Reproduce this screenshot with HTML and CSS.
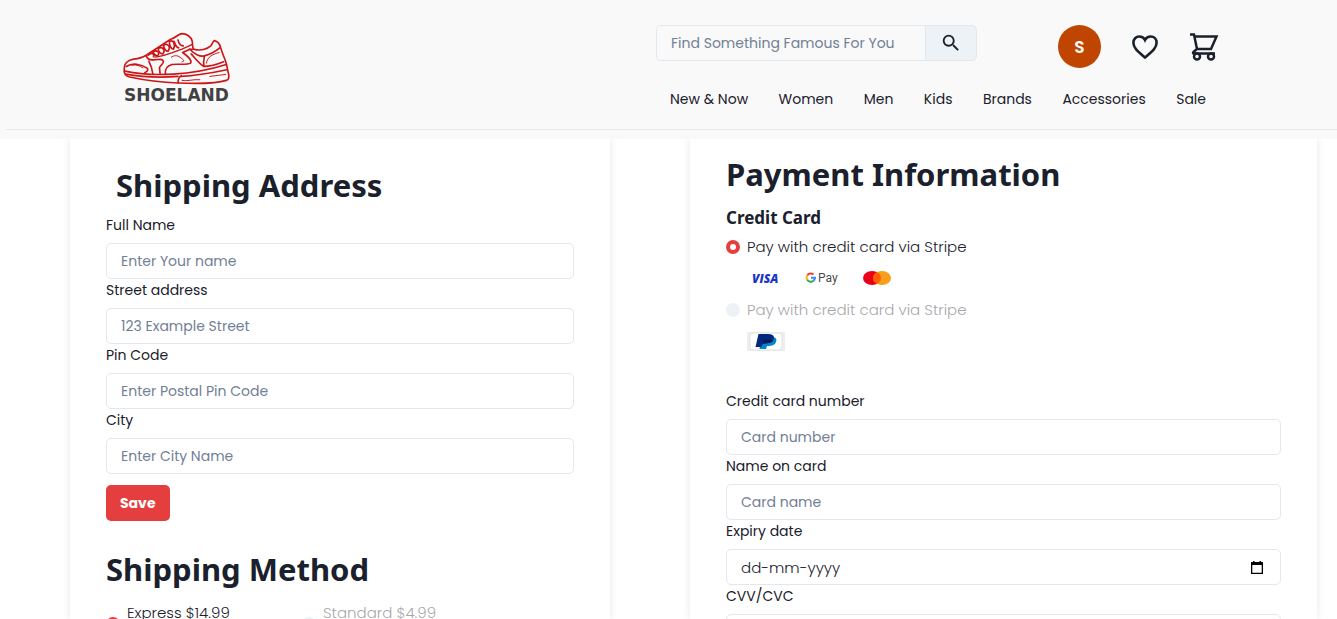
FILE: index.html
```html
<!DOCTYPE html>
<html lang="en">
<head>
<meta charset="utf-8">
<meta name="viewport" content="width=device-width, initial-scale=1">
<title>Shoeland – Checkout</title>
<link rel="stylesheet" href="styles.css">
</head>
<body>
<div class="page">
  <header class="header">
    <div class="header-inner">
      <a class="brand" href="#" aria-label="Shoeland home">
        <svg class="brand-shoe" viewBox="36 36 327 160" fill="none" stroke="#cc1517" stroke-width="5" stroke-linecap="round" stroke-linejoin="round" aria-hidden="true">
          <path d="M42 150C40 134 50 121 70 118C84 116 96 114 108 106L182 58C194 56 204 42 216 41C230 41 244 50 247 64C249 76 246 84 252 88C272 94 292 88 303 78C309 72 308 64 314 62C324 64 330 72 333 84C338 102 346 116 350 132L356 160C359 172 357 180 350 182C320 192 250 192 205 190C150 188 95 180 58 172C44 168 40 160 42 150Z"/>
          <path d="M44 154C80 162 140 166 190 163C250 160 305 148 350 134M46 163C90 171 150 174 204 170"/>
          <path d="M48 140C66 128 92 132 112 146C114 152 110 156 104 158"/>
          <path d="M108 108C112 118 118 122 132 120C146 118 158 116 160 124C161 134 150 136 148 144L150 162M116 124C122 136 126 146 128 162"/>
          <path d="M166 162C164 148 172 138 186 134C204 132 232 136 242 130C248 122 232 108 218 98L240 88L252 88"/>
          <path d="M134 112C160 110 190 98 216 88L246 74" stroke-width="4"/>
          <path d="M114 106C124 96 134 102 130 110M128 96C140 88 152 98 142 108M128 96C132 104 136 108 142 108M144 86C156 78 168 90 158 102M144 86C146 96 150 102 158 102M160 76C172 68 184 80 174 94M160 76C162 86 166 94 174 94M178 64C190 58 198 74 190 88M178 64C178 78 182 86 190 88M192 64C196 76 198 82 206 84M204 60C206 70 210 78 220 78" stroke-width="5"/>
          <path d="M240 88C254 104 272 112 284 108C300 104 318 94 330 84M244 102C260 120 268 132 282 140C280 122 284 110 284 108M282 140C298 140 322 134 342 126"/>
          <path d="M290 130C292 112 306 104 328 98M184 112C192 106 202 106 210 112C220 120 228 124 216 126" stroke-width="3"/>
          <path d="M204 190C204 178 206 172 214 168M212 170C258 168 304 160 352 150"/>
          <path d="M216 182C230 186 250 178 270 180M64 136C78 134 90 138 98 144M300 170C318 168 334 166 348 164" stroke-width="3"/>
        </svg>
        <span class="brand-name">SHOELAND</span>
      </a>
      <div class="header-main">
        <div class="header-top">
          <form class="search" role="search">
            <input class="search-input" type="search" aria-label="Search" placeholder="Find Something Famous For You">
            <button class="search-button" type="button" aria-label="Search">
              <svg width="22" height="22" viewBox="0 0 24 24" fill="currentColor" aria-hidden="true"><path d="M15.5 14h-.79l-.28-.27A6.47 6.47 0 0 0 16 9.5 6.5 6.5 0 1 0 9.5 16c1.61 0 3.09-.59 4.23-1.57l.27.28v.79l5 4.99L20.49 19l-4.99-5zm-6 0C7.01 14 5 11.99 5 9.5S7.01 5 9.5 5 14 7.01 14 9.5 11.99 14 9.5 14z"/></svg>
            </button>
          </form>
          <div class="actions">
            <button class="avatar" type="button" aria-label="Account">S</button>
            <a class="action" href="#" aria-label="Wishlist">
              <svg width="30" height="28" viewBox="0 0 30 28" fill="none" stroke="currentColor" stroke-width="2.600" aria-hidden="true"><path d="M15 24.500C8 18.500 3.400 15 3.400 9.800C3.400 6 6 3.500 9.300 3.500C11.700 3.500 13.900 4.800 15 7C16.100 4.800 18.300 3.500 20.700 3.500C24 3.500 26.600 6 26.600 9.800C26.600 15 22 18.500 15 24.500Z"/></svg>
            </a>
            <a class="action" href="#" aria-label="Cart">
              <svg width="30" height="30" viewBox="0 0 30 30" fill="none" stroke="currentColor" stroke-width="2.500" aria-hidden="true"><path d="M1 2.500H5L8 17H22L27.500 4.500H5.500M8 17L4.500 20C3.500 21 4 21.500 5.500 21.500H26"/><circle cx="8" cy="24.500" r="3"/><circle cx="22" cy="24.500" r="3"/></svg>
            </a>
          </div>
        </div>
        <nav class="nav" aria-label="Main">
          <a href="#">New &amp; Now</a>
          <a href="#">Women</a>
          <a href="#">Men</a>
          <a href="#">Kids</a>
          <a href="#">Brands</a>
          <a href="#">Accessories</a>
          <a href="#">Sale</a>
        </nav>
      </div>
    </div>
  </header>

  <main class="checkout">
    <section class="panel panel-shipping">
      <h2 class="title title-indent">Shipping Address</h2>
      <form>
        <div class="field"><label for="name">Full Name</label><input id="name" type="text" placeholder="Enter Your name"></div>
        <div class="field"><label for="street">Street address</label><input id="street" type="text" placeholder="123 Example Street"></div>
        <div class="field"><label for="pin">Pin Code</label><input id="pin" type="text" placeholder="Enter Postal Pin Code"></div>
        <div class="field"><label for="city">City</label><input id="city" type="text" placeholder="Enter City Name"></div>
        <button class="save" type="button">Save</button>
      </form>
      <h2 class="title">Shipping Method</h2>
      <div class="methods">
        <label class="choice method"><input type="radio" name="method" checked><span>Express $14.99</span></label>
        <label class="choice method"><input type="radio" name="method" disabled><span>Standard $4.99</span></label>
      </div>
    </section>

    <section class="panel panel-payment">
      <h2 class="title">Payment Information</h2>
      <h3 class="subtitle">Credit Card</h3>
      <label class="choice"><input type="radio" name="pay" checked><span>Pay with credit card via Stripe</span></label>
      <div class="cards">
        <svg width="38" height="20" viewBox="0 0 38 20" role="img" aria-label="Visa"><text class="visa" x="5" y="15">VISA</text></svg>
        <svg width="38" height="20" viewBox="0 0 38 20" role="img" aria-label="Google Pay">
          <g fill="none" stroke-width="2"><path d="M10.500 6.500A4.200 4.200 0 0 0 4.200 7.500" stroke="#ea4335"/><path d="M4.200 7.500A4.200 4.200 0 0 0 4.200 11.800" stroke="#fbbc04"/><path d="M4.200 11.800A4.200 4.200 0 0 0 10.500 12.800" stroke="#34a853"/><path d="M10.500 12.800A4.200 4.200 0 0 0 12 9.800H8" stroke="#4285f4"/></g>
          <text class="gpay" x="15" y="14">Pay</text>
        </svg>
        <svg width="38" height="20" viewBox="0 0 38 20" role="img" aria-label="Mastercard"><ellipse cx="13" cy="10" rx="9" ry="7" fill="#eb001b"/><ellipse cx="23" cy="10" rx="9" ry="7" fill="#f79e1b"/><path d="M18 4.200A9 7 0 0 1 18 15.800A9 7 0 0 1 18 4.200Z" fill="#ff5f00"/></svg>
      </div>
      <label class="choice"><input type="radio" name="pay" disabled><span>Pay with credit card via Stripe</span></label>
      <div class="cards cards-paypal">
        <svg width="38" height="19" viewBox="0 0 38 19" role="img" aria-label="PayPal">
          <rect width="38" height="19" fill="#eee"/><rect x="3" y="1" width="32" height="17" rx="3" fill="#fff" stroke="#e2e2e2"/>
          <path d="M14 5H25C29 5 30 7 29 10C28 13 25 14 20 14L19 17H12.500Z" fill="#0085cc"/>
          <path d="M11.500 2H21C26 2 28 4 26.500 7.500C25.500 10.500 22 11.500 16 11.500L14.500 15H8.500Z" fill="#00287c"/>
          <path d="M17 8H26.400C25.500 10.500 22 11.500 16 11.500Z" fill="#001a5c"/>
        </svg>
      </div>
      <form>
        <div class="field"><label for="card">Credit card number</label><input id="card" type="text" inputmode="numeric" placeholder="Card number"></div>
        <div class="field"><label for="holder">Name on card</label><input id="holder" type="text" placeholder="Card name"></div>
        <div class="field">
          <label for="expiry">Expiry date</label>
          <div class="date">
            <input id="expiry" type="text" placeholder="dd-mm-yyyy">
            <button type="button" aria-label="Pick a date"><svg width="12" height="13" viewBox="0 0 12 13" aria-hidden="true"><path d="M2 0H3.500V1H8.500V0H10V1H12V13H0V1H2ZM1.300 4V11.700H10.700V4Z" fill="#000" fill-rule="evenodd"/></svg></button>
          </div>
        </div>
        <div class="field"><label for="cvv">CVV/CVC</label><input id="cvv" type="text" inputmode="numeric"></div>
      </form>
    </section>
  </main>
</div>
</body>
</html>
```

FILE: styles.css
```css
* { box-sizing: border-box; }

body {
  margin: 0;
  background: #fff;
  color: #1a202c;
  font: 400 14px/22px Poppins, Inter, sans-serif;
}

button, input { font: inherit; color: inherit; }
a { color: inherit; text-decoration: none; }
svg { display: block; flex: none; }

.page {
  display: flex;
  flex-direction: column;
  height: 100vh;
}

/* Header */
.header {
  flex: none;
  padding: 0 0 9px 6px;
  background: #f9f9f9;
}

.header-inner {
  display: flex;
  justify-content: space-between;
  align-items: flex-start;
  padding: 25px 118px 19px 116px;
  border-bottom: 1px solid #e2e8f0;
}

.brand {
  display: flex;
  flex-direction: column;
  align-items: center;
  padding-top: 7px;
}

.brand-shoe { width: 109px; height: 53px; }

.brand-name {
  color: #414042;
  font: 700 17px/20px "DejaVu Sans", sans-serif;
}

.header-main { width: 563px; }

.header-top {
  display: flex;
  justify-content: space-between;
}

.search {
  display: flex;
  width: 321px;
  height: 36px;
}

.search-input {
  flex: 1;
  min-width: 0;
  padding: 0 14px;
  border: 1px solid #e2e8f0;
  border-right: 0;
  border-radius: 5px 0 0 5px;
  background: transparent;
  outline: 0;
}

input::placeholder { color: #718096; opacity: 1; }

.search-button {
  display: grid;
  place-items: center;
  width: 52px;
  padding: 0;
  border: 1px solid #e2e8f0;
  border-radius: 0 5px 5px 0;
  background: #edf2f7;
}

.actions {
  display: flex;
  align-items: center;
  gap: 29px;
}

.avatar {
  width: 43px;
  height: 43px;
  padding: 0;
  border: 0;
  border-radius: 50%;
  background: #c04500;
  color: #fff;
  font-size: 17px;
  font-weight: 600;
}

.nav {
  display: flex;
  justify-content: space-between;
  padding: 20px 13px 0 14px;
}

/* Checkout panels */
.checkout {
  display: grid;
  grid-template-columns: 540fr 627fr;
  gap: 80px;
  flex: 1;
  min-height: 0;
  padding: 0 20px 0 70px;
  overflow-y: auto;
  scrollbar-width: none;
}

.panel {
  min-height: 100%;
  padding: 15px 36px 36px;
  box-shadow: 0 0 8px rgba(0, 0, 0, 0.1);
}

.panel-shipping { padding-top: 26px; }

.title {
  margin: 0 0 9px;
  font: 700 31px/40px "Segoe UI", "Noto Sans", sans-serif;
}

.title-indent { padding-left: 10px; }

.subtitle {
  margin: 0 0 6px;
  padding-top: 3px;
  font: 700 17px/24px "Segoe UI", "Noto Sans", sans-serif;
}

.field label {
  display: block;
  margin-bottom: 7px;
}

.field input {
  display: block;
  width: 100%;
  height: 36px;
  padding: 0 14px;
  border: 1px solid #e2e8f0;
  border-radius: 5px;
  background: #fff;
}

.date { display: grid; align-items: center; }
.date input, .date button { grid-area: 1 / 1; }
.date input::placeholder { color: #1a202c; }
.field .date input { font-size: 15px; font-weight: 300; }

.date button {
  justify-self: end;
  margin-right: 18px;
  padding: 0;
  border: 0;
  background: none;
}

.save {
  display: block;
  height: 36px;
  margin: 11px 0 28px;
  padding: 0 14px;
  border: 0;
  border-radius: 5px;
  background: #e53e3e;
  color: #fff;
  font-weight: 700;
}

.choice {
  display: flex;
  align-items: center;
  gap: 7px;
  font-size: 15px;
  font-weight: 300;
}

.choice input {
  appearance: none;
  flex: none;
  width: 14px;
  height: 14px;
  margin: 0;
  border-radius: 50%;
  background: #edf2f7;
}

.choice input:checked {
  border: 4px solid #e53e3e;
  background: #fff;
}

.choice input:disabled + span { opacity: 0.4; }

.methods { display: flex; gap: 76px; padding-top: 4px; }
.method { width: 120px; }
.method span { min-height: 44px; white-space: nowrap; }

.cards {
  display: flex;
  gap: 18px;
  margin: 10px 0 11px 21px;
}

.cards-paypal { margin: 11px 0 39px 21px; }

.visa { font: italic 800 12px "Open Sans", sans-serif; fill: #1a34c8; }
.gpay { font: 400 12px Roboto, sans-serif; fill: #4a4d52; }
```
